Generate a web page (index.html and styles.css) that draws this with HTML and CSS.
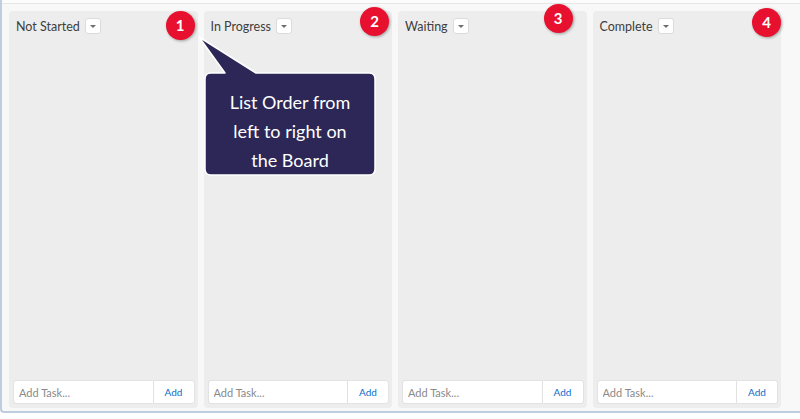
FILE: index.html
```html
<!DOCTYPE html>
<html lang="en">
<head>
    <meta charset="UTF-8">
    <title>Task Board</title>
    <meta name="viewport" content="width=device-width, initial-scale=1.0">
    <link rel="stylesheet" href="styles.css">
</head>
<body>
    <div class="frame">
        <div class="top-rule"></div>
        <div class="board">
            <div class="column">
                <div class="column-header">
                    <span class="column-title">Not Started</span>
                    <button class="menu-btn" type="button"><span class="caret"></span></button>
                </div>
                <div class="column-body"></div>
                <form class="add-task">
                    <input type="text" placeholder="Add Task...">
                    <button type="submit">Add</button>
                </form>
                <span class="badge badge-1">1</span>
            </div>
            <div class="column">
                <div class="column-header">
                    <span class="column-title">In Progress</span>
                    <button class="menu-btn" type="button"><span class="caret"></span></button>
                </div>
                <div class="column-body"></div>
                <form class="add-task">
                    <input type="text" placeholder="Add Task...">
                    <button type="submit">Add</button>
                </form>
                <span class="badge badge-2">2</span>
            </div>
            <div class="column">
                <div class="column-header">
                    <span class="column-title">Waiting</span>
                    <button class="menu-btn" type="button"><span class="caret"></span></button>
                </div>
                <div class="column-body"></div>
                <form class="add-task">
                    <input type="text" placeholder="Add Task...">
                    <button type="submit">Add</button>
                </form>
                <span class="badge badge-3">3</span>
            </div>
            <div class="column">
                <div class="column-header">
                    <span class="column-title">Complete</span>
                    <button class="menu-btn" type="button"><span class="caret"></span></button>
                </div>
                <div class="column-body"></div>
                <form class="add-task">
                    <input type="text" placeholder="Add Task...">
                    <button type="submit">Add</button>
                </form>
                <span class="badge badge-4">4</span>
            </div>

            <div class="callout">
                <svg width="182" height="144" viewBox="0 0 182 144">
                    <path d="M 3 3 L 60 39 H 173 Q 179 39 179 45 V 135 Q 179 141 173 141 H 15 Q 9 141 9 135 V 45 Q 9 39 15 39 H 29 Z"
                          fill="#2c2757" stroke="#ffffff" stroke-width="1.5" stroke-linejoin="round"/>
                </svg>
                <p class="callout-text">List Order from<br>left to right on<br>the Board</p>
            </div>
        </div>
    </div>
</body>
</html>
```

FILE: styles.css
```css
body {
    margin: 0;
    background: #ffffff;
    font-family: Lato, "Open Sans", Arial, sans-serif;
}
.frame {
    position: relative;
    height: 413px;
    background: #f8f8f8;
    border-left: 2px solid #bfcde0;
    border-bottom: 2px solid #bfcde0;
    border-bottom-left-radius: 4px;
    box-sizing: border-box;
}
.top-rule {
    height: 3px;
    background: #fcfcfc;
    border-bottom: 1px solid #e6e6e6;
}
.board {
    position: relative;
    display: flex;
    gap: 6px;
    padding: 7px 0 0 7px;
}
.column {
    position: relative;
    flex: 0 0 auto;
    width: 188.5px;
    min-width: 0;
    height: 397px;
    background: #ededed;
    border-radius: 4px;
    display: flex;
    flex-direction: column;
    box-sizing: border-box;
    padding: 0 3px 4px 4px;
}
.column-header {
    display: flex;
    align-items: center;
    height: 30px;
    padding: 0 0 0 3px;
}
.column-title {
    font-size: 12.5px;
    color: #3e3e3c;
}
.menu-btn {
    margin-left: 5px;
    width: 16px;
    height: 16px;
    padding: 0;
    background: #ffffff;
    border: 1px solid #dddbda;
    border-radius: 3px;
    display: flex;
    align-items: center;
    justify-content: center;
}
.caret {
    width: 0;
    height: 0;
    border-left: 3px solid transparent;
    border-right: 3px solid transparent;
    border-top: 3px solid #706e6b;
    margin-top: 1px;
}
.column-body {
    flex: 1;
}
.add-task {
    display: flex;
    height: 24px;
}
.add-task input {
    flex: 1;
    width: 0;
    min-width: 0;
    margin: 0;
    padding: 0 5px;
    font-family: Lato, "Open Sans", Arial, sans-serif;
    font-size: 11px;
    color: #333;
    background: #ffffff;
    border: 1px solid #e2e2e2;
    border-right: none;
    border-radius: 3px 0 0 3px;
    outline: none;
}
.add-task input::placeholder {
    color: #8a8a8a;
}
.add-task button {
    flex: 0 0 42px;
    margin: 0;
    padding: 0;
    font-family: Lato, "Open Sans", Arial, sans-serif;
    font-size: 10px;
    color: #0b6bcb;
    background: #ffffff;
    border: 1px solid #e2e2e2;
    border-radius: 0 3px 3px 0;
}
.badge {
    position: absolute;
    width: 29px;
    height: 29px;
    border-radius: 50%;
    background: #e8102f;
    color: #ffffff;
    font-size: 15px;
    font-weight: bold;
    line-height: 29px;
    text-align: center;
    box-shadow: 1px 1px 3px rgba(0, 0, 0, 0.35);
}
.badge-1 { top: 0; right: 3px; }
.badge-2 { top: -4px; right: 3px; }
.badge-3 { top: -7px; right: 14px; }
.badge-4 { top: -3px; right: 0; }
.callout {
    position: absolute;
    left: 194px;
    top: 30px;
    width: 182px;
    height: 144px;
}
.callout svg {
    display: block;
}
.callout-text {
    position: absolute;
    left: 9px;
    top: 39px;
    width: 170px;
    height: 102px;
    margin: 0;
    padding-top: 15px;
    box-sizing: border-box;
    color: #ffffff;
    font-size: 18px;
    line-height: 29px;
    text-align: center;
}
```
